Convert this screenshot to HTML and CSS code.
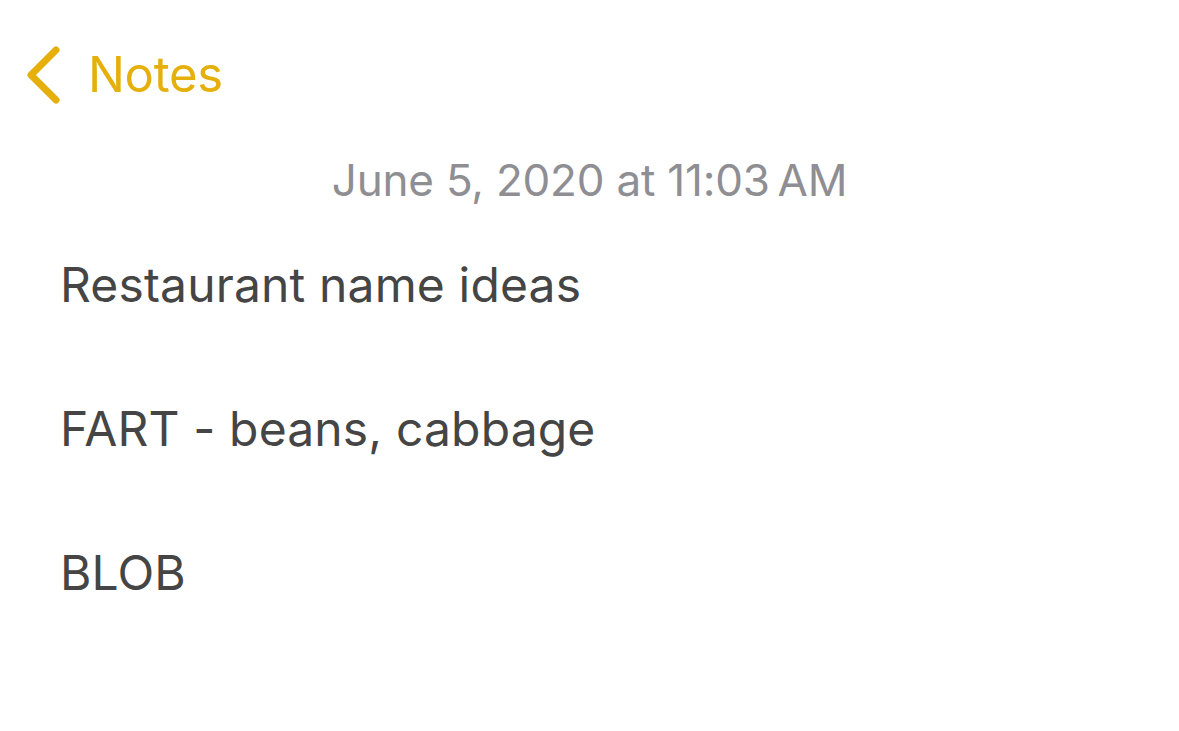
FILE: index.html
```html
<!DOCTYPE html>
<html>
<head>
<meta charset="utf-8">
<link rel="stylesheet" href="styles.css">
</head>
<body>
<div class="screen">
  <nav class="navbar">
    <a class="back">
      <svg class="chevron" width="36" height="58" viewBox="0 0 36 58"><path d="M31 4 L6 29 L31 54" fill="none" stroke="#E5B00C" stroke-width="7" stroke-linecap="round" stroke-linejoin="round"/></svg>
      <span class="back-label">Notes</span>
    </a>
  </nav>
  <div class="date">June 5, 2020 at 11:03&#8201;AM</div>
  <div class="note">
    <p class="line">Restaurant name ideas</p>
    <p class="line">FART - beans, cabbage</p>
    <p class="line">BLOB</p>
  </div>
</div>
</body>
</html>
```
FILE: styles.css
```css
html, body {
  margin: 0;
  padding: 0;
  background: #ffffff;
}
.screen {
  width: 1179px;
  height: 731px;
  font-family: Inter, "Noto Sans", sans-serif;
}
.navbar {
  display: flex;
  align-items: center;
  padding: 46px 0 0 25px;
  height: 58px;
}
.back {
  display: flex;
  align-items: center;
  gap: 27px;
  color: #E5B00C;
}
.chevron {
  display: block;
}
.back-label {
  font-size: 49px;
  line-height: 58px;
  letter-spacing: -0.3px;
}
.date {
  margin-top: 50px;
  text-align: center;
  color: #8E8E93;
  font-size: 44px;
  line-height: 52px;
  letter-spacing: -0.2px;
}
.note {
  padding: 43px 0 0 60px;
  color: #454545;
}
.line {
  margin: 0 0 72px 0;
  font-size: 48px;
  line-height: 72px;
  letter-spacing: 0.15px;
}
```
